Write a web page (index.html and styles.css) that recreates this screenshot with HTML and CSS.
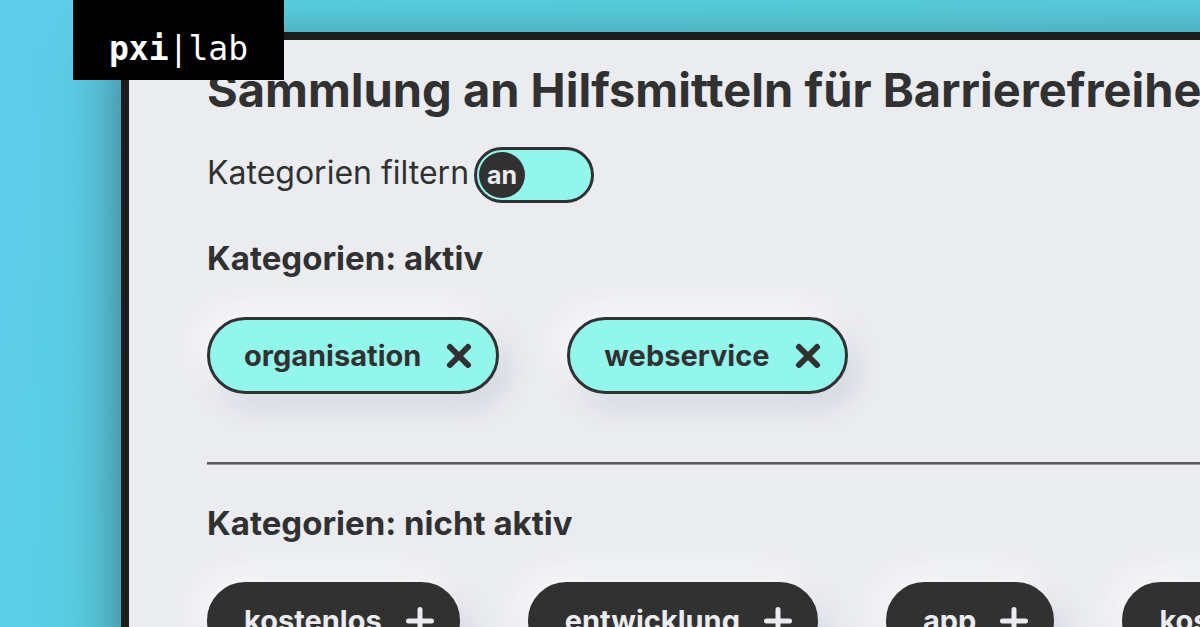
FILE: index.html
```html
<!DOCTYPE html>
<html lang="de">
<head>
<meta charset="utf-8">
<meta name="viewport" content="width=device-width, initial-scale=1">
<title>pxi|lab – Sammlung an Hilfsmitteln für Barrierefreiheit</title>
<link rel="stylesheet" href="styles.css">
</head>
<body>
<a class="logo" href="#"><strong>pxi</strong>|lab</a>
<main class="panel">
  <h1 class="title">Sammlung an Hilfsmitteln für Barrierefreiheit</h1>
  <div class="filter">
    <span id="filter-label">Kategorien filtern</span>
    <button class="switch" type="button" role="switch" aria-checked="true" aria-labelledby="filter-label"><span class="knob">an</span></button>
  </div>
  <section class="group">
    <h2 class="subtitle">Kategorien: aktiv</h2>
    <div class="chips">
      <button class="chip active" type="button">organisation
        <svg class="icon" viewBox="0 0 30 30" aria-hidden="true"><path d="M6 6 24 24M24 6 6 24"/></svg></button>
      <button class="chip active" type="button">webservice
        <svg class="icon" viewBox="0 0 30 30" aria-hidden="true"><path d="M6 6 24 24M24 6 6 24"/></svg></button>
    </div>
  </section>
  <hr class="rule">
  <section class="group">
    <h2 class="subtitle">Kategorien: nicht aktiv</h2>
    <div class="chips">
      <button class="chip" type="button">kostenlos
        <svg class="icon" viewBox="0 0 30 30" aria-hidden="true"><path d="M15 3.500V26.500M3.500 15H26.500"/></svg></button>
      <button class="chip" type="button">entwicklung
        <svg class="icon" viewBox="0 0 30 30" aria-hidden="true"><path d="M15 3.500V26.500M3.500 15H26.500"/></svg></button>
      <button class="chip" type="button">app
        <svg class="icon" viewBox="0 0 30 30" aria-hidden="true"><path d="M15 3.500V26.500M3.500 15H26.500"/></svg></button>
      <button class="chip" type="button">kostenpflichtig
        <svg class="icon" viewBox="0 0 30 30" aria-hidden="true"><path d="M15 3.500V26.500M3.500 15H26.500"/></svg></button>
    </div>
  </section>
</main>
</body>
</html>
```
FILE: styles.css
```css
* { box-sizing: border-box; }

body {
  margin: 0;
  height: 100vh;
  overflow: hidden;
  padding: 32px 0 0 121px;
  background: linear-gradient(100deg, #5ecbeb 0%, #59d0e2 18%, #58cfde 70%, #5acbe1 100%);
  color: #313131;
  font-family: Inter, "Liberation Sans", sans-serif;
}

.logo {
  position: absolute;
  top: 0;
  left: 73px;
  z-index: 1;
  padding: 29px 36px 11px;
  background: #000;
  color: #fff;
  font: 33px/40px "DejaVu Sans Mono", monospace;
  text-decoration: none;
}

.panel {
  min-height: 100%;
  margin-right: -80px;
  padding: 15px 0 0 78px;
  border: solid #1c1c1c;
  border-width: 8px 0 0 8px;
  background: #ebecf0;
  box-shadow: 0 16px 56px rgba(40, 50, 60, 0.6);
}

.title {
  margin: 0;
  font-size: 47px;
  line-height: 70px;
  font-weight: 700;
  white-space: nowrap;
}

.filter {
  display: flex;
  align-items: baseline;
  gap: 5px;
  margin-top: 22px;
  font-size: 32px;
  line-height: 48px;
}

.switch {
  width: 120px;
  height: 56px;
  padding: 2px;
  border: 3px solid #313131;
  border-radius: 28px;
  background: #93f6ed;
}

.knob {
  display: flex;
  align-items: center;
  justify-content: center;
  width: 46px;
  height: 46px;
  border-radius: 50%;
  background: #313131;
  color: #ebecf0;
  font: 700 25px/28px Inter, sans-serif;
}

.subtitle {
  margin: 0;
  font-size: 33px;
  line-height: 44px;
  font-weight: 700;
}

.filter + .group { margin-top: 33px; }

.chips {
  display: flex;
  gap: 68px;
  margin-top: 37px;
}

.chip {
  display: flex;
  flex: none;
  align-items: center;
  gap: 23px;
  height: 77px;
  padding: 0 22px 0 34px;
  border: 3px solid #313131;
  border-radius: 39px;
  background: #313131;
  color: #ebecf0;
  font: 700 29px/40px Inter, sans-serif;
  box-shadow: -8px -8px 32px #f9fafb, 8px 12px 28px #cccfdb;
}

.chip.active {
  background: #93f6ed;
  color: #313131;
}

.icon {
  width: 30px;
  height: 30px;
  fill: none;
  stroke: currentColor;
  stroke-width: 5;
  stroke-linecap: round;
}

.active .icon { stroke-width: 6; }

.rule {
  height: 3px;
  margin: 68px 0 36px;
  border: 0;
  border-top: 2px solid #5b5b5b;
  background: #999;
}
```
